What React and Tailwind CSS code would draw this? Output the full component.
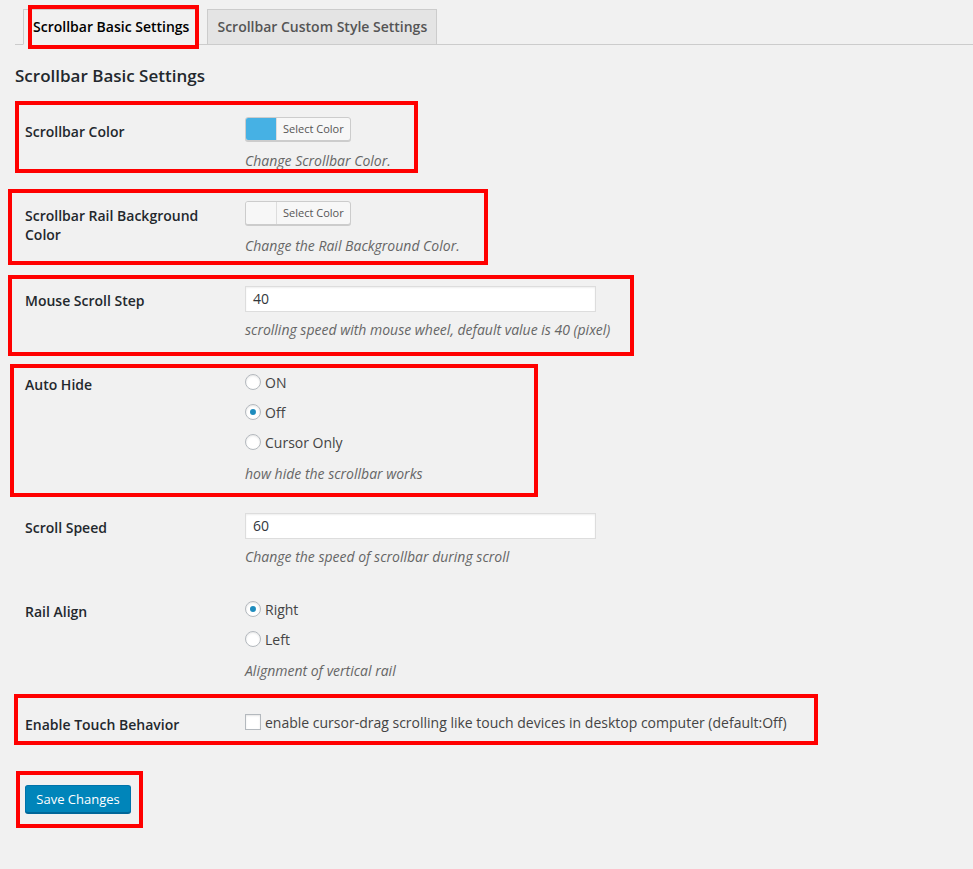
import React from "react";

const font = { fontFamily: '"Open Sans", "Noto Sans", Arial, sans-serif' };

function Desc({ children, className = "" }) {
  return (
    <p className={"text-[14px] leading-[20px] italic text-[#666] " + className}>{children}</p>
  );
}

function ColorPicker({ color }) {
  return (
    <div className="flex h-[24px] w-[106px] rounded-[3px] border border-[#ccc] bg-[#f7f7f7] shadow-[0_1px_0_#ccc] overflow-hidden">
      <div className="w-[30px] shrink-0 h-full" style={{ background: color }} />
      <div className="flex-1 border-l border-[#ddd] text-[11px] leading-[22px] text-[#555] px-[6px]">
        Select Color
      </div>
    </div>
  );
}

function TextInput({ value }) {
  return (
    <div className="w-[351px] h-[26px] bg-white border border-[#ddd] shadow-[inset_0_1px_2px_rgba(0,0,0,0.07)] px-[7px] text-[14px] leading-[24px] text-[#32373c]">
      {value}
    </div>
  );
}

function Radio({ checked, label }) {
  return (
    <div className="flex items-center h-[22px] text-[14px] text-[#444]">
      <span className="w-[16px] h-[16px] rounded-full border border-[#b4b9be] bg-white shadow-[inset_0_1px_2px_rgba(0,0,0,0.1)] flex items-center justify-center mr-[4px]">
        {checked && <span className="w-[6px] h-[6px] rounded-full bg-[#1e8cbe]" />}
      </span>
      {label}
    </div>
  );
}

function Row({ label, children, thClass = "pt-[20px]", tdClass = "py-[15px]" }) {
  return (
    <div className="flex pl-[25px]">
      <div className={"w-[210px] shrink-0 pr-[10px] text-[14px] leading-[19px] font-semibold text-[#23282d] " + thClass}>
        {label}
      </div>
      <div className={"pl-[10px] " + tdClass}>{children}</div>
    </div>
  );
}

function RedBox({ l, t, w, h }) {
  return (
    <div
      className="absolute border-[4px] border-[#ff0000] pointer-events-none"
      style={{ left: l, top: t, width: w, height: h }}
    />
  );
}

export default function App() {
  return (
    <div className="relative w-[973px] h-[869px] bg-[#f1f1f1] overflow-hidden" style={font}>
      {/* Tabs */}
      <div className="ml-[15px] pt-[9px] border-b border-[#ccc] flex">
        <div className="ml-[8px] -mb-px border border-[#ccc] border-b-[#f1f1f1] bg-[#f1f1f1] px-[9px] py-[5px] text-[14px] leading-[24px] font-semibold text-black">
          Scrollbar Basic Settings
        </div>
        <div className="ml-[8px] border border-b-0 border-[#ccc] bg-[#e4e4e4] px-[9px] py-[5px] text-[14px] leading-[24px] font-semibold text-[#555]">
          Scrollbar Custom Style Settings
        </div>
      </div>

      <h2 className="ml-[15px] mt-[20px] mb-[15px] text-[17px] leading-[22px] font-semibold text-[#23282d]">
        Scrollbar Basic Settings
      </h2>

      <div className="flex flex-col">
        <Row label="Scrollbar Color">
          <ColorPicker color="#46b1e4" />
          <Desc className="mt-[10px]">Change Scrollbar Color.</Desc>
        </Row>
        <Row label={<>Scrollbar Rail Background<br />Color</>}>
          <ColorPicker color="#f7f7f7" />
          <Desc className="mt-[11px]">Change the Rail Background Color.</Desc>
        </Row>
        <Row label="Mouse Scroll Step">
          <TextInput value="40" />
          <Desc className="mt-[8px]">scrolling speed with mouse wheel, default value is 40 (pixel)</Desc>
        </Row>
        <Row label="Auto Hide" tdClass="pt-[15px] pb-[14px]">
          <div className="flex flex-col gap-[8px] mt-[1px]">
            <Radio label="ON" />
            <Radio checked label="Off" />
            <Radio label="Cursor Only" />
          </div>
          <Desc className="mt-[11px]">how hide the scrollbar works</Desc>
        </Row>
        <Row label="Scroll Speed">
          <TextInput value="60" />
          <Desc className="mt-[8px]">Change the speed of scrollbar during scroll</Desc>
        </Row>
        <Row label="Rail Align" tdClass="pt-[15px] pb-[14px]">
          <div className="flex flex-col gap-[8px] mt-[1px]">
            <Radio checked label="Right" />
            <Radio label="Left" />
          </div>
          <Desc className="mt-[11px]">Alignment of vertical rail</Desc>
        </Row>
        <Row label="Enable Touch Behavior">
          <div className="flex items-center h-[24px] text-[14px] text-[#444]">
            <span className="w-[16px] h-[16px] border border-[#b4b9be] bg-white shadow-[inset_0_1px_2px_rgba(0,0,0,0.1)] mr-[4px]" />
            enable cursor-drag scrolling like touch devices in desktop computer (default:Off)
          </div>
        </Row>
      </div>

      <div className="ml-[25px] mt-[36px]">
        <button className="h-[28px] w-[106px] rounded-[3px] bg-[#0085ba] border border-[#0073aa] border-b-[#006799] shadow-[0_1px_0_#006799] text-white text-[13px] leading-[26px] px-[10px]">
          Save Changes
        </button>
      </div>

      {/* Annotation boxes */}
      <RedBox l={28} t={5} w={171} h={44} />
      <RedBox l={15} t={101} w={403} h={72} />
      <RedBox l={8} t={189} w={480} h={76} />
      <RedBox l={8} t={275} w={626} h={81} />
      <RedBox l={10} t={364} w={528} h={133} />
      <RedBox l={14} t={694} w={804} h={51} />
      <RedBox l={16} t={771} w={127} h={57} />
    </div>
  );
}
